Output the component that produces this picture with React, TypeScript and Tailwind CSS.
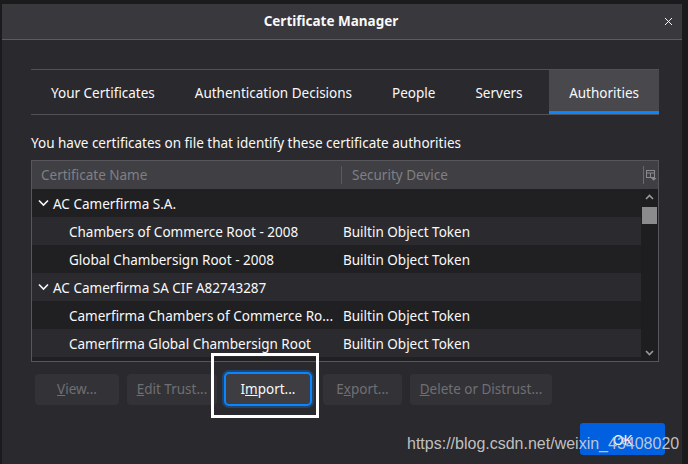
import { X } from "lucide-react";

const tabs = ["Your Certificates", "Authentication Decisions", "People", "Servers", "Authorities"];

type Row = { name: string; device?: string; group?: boolean };

const rows: Row[] = [
  { name: "AC Camerfirma S.A.", group: true },
  { name: "Chambers of Commerce Root - 2008", device: "Builtin Object Token" },
  { name: "Global Chambersign Root - 2008", device: "Builtin Object Token" },
  { name: "AC Camerfirma SA CIF A82743287", group: true },
  { name: "Camerfirma Chambers of Commerce Ro...", device: "Builtin Object Token" },
  { name: "Camerfirma Global Chambersign Root", device: "Builtin Object Token" },
  { name: "", device: "" },
];

const Chevron = () => (
  <svg width="11" height="8" viewBox="0 0 11 8" className="mr-[4px] mb-[2px]">
    <path d="M1 1.5 L5.5 6 L10 1.5" stroke="#f9f9fa" strokeWidth="1.6" fill="none" />
  </svg>
);

const App: React.FC = () => {
  return (
    <div
      className="relative w-[688px] h-[464px] overflow-hidden bg-[#1b1b1e] pt-[4px] pl-[2px] text-[#f9f9fa]"
      style={{ fontFamily: '"Noto Sans", "Open Sans", sans-serif' }}
    >
      <div className="w-[680px] h-[460px] bg-[#2a2a2e] flex flex-col">
        {/* Title bar */}
        <div className="relative h-[36px] bg-[#38383d] border-b border-[#5b5b60] flex items-center justify-center pr-[22px] shrink-0">
          <span className="text-[13.5px] font-bold">Certificate Manager</span>
          <X size={13} strokeWidth={1.8} className="absolute right-[7px] top-[11px] text-[#f9f9fa]" />
        </div>

        <div className="pl-[29px] pr-[23px] pt-[29px] flex flex-col">
          {/* Tabs */}
          <div className="flex h-[46px] border-y border-[#515156]">
            {tabs.map((t) => {
              const active = t === "Authorities";
              return (
                <div
                  key={t}
                  className={
                    active
                      ? "relative px-[20px] pt-[3px] bg-[#48484d] flex items-center text-[13.5px] ml-auto"
                      : "px-[20px] pt-[3px] flex items-center text-[13.5px]"
                  }
                >
                  {t}
                  {active && <div className="absolute left-0 right-0 bottom-0 h-[3px] bg-[#0a84ff]" />}
                </div>
              );
            })}
          </div>

          <div className="mt-[17px] pt-[1px] text-[13.5px] leading-[20px]">
            You have certificates on file that identify these certificate authorities
          </div>

          {/* Tree list */}
          <div className="mt-[7px] h-[202px] border border-[#56565b] flex flex-col overflow-hidden">
            <div className="h-[28px] bg-[#3f3f44] flex items-center text-[13.5px] text-[#808085] shrink-0">
              <div className="w-[310px] pl-[9px] border-r border-[#5a5a5f] h-[18px] leading-[18px]">Certificate Name</div>
              <div className="flex-1 pl-[10px] leading-[18px]">Security Device</div>
              <div className="w-[15px] h-[18px] border-l border-[#6a6a6f] flex items-center justify-end pr-[1px]">
                <svg width="11" height="11" viewBox="0 0 11 11">
                  <rect x="0.5" y="0.5" width="8" height="7" stroke="#8a8a8f" fill="none" />
                  <line x1="0.5" y1="3" x2="8.5" y2="3" stroke="#8a8a8f" />
                  <line x1="4.5" y1="3" x2="4.5" y2="7.5" stroke="#8a8a8f" />
                  <path d="M5 8 L10.5 8 L7.75 10.8 Z" fill="#8a8a8f" />
                </svg>
              </div>
            </div>
            <div className="flex flex-1 overflow-hidden">
              <div className="flex-1 flex flex-col">
                {rows.map((r, i) => (
                  <div
                    key={i}
                    className={`h-[28px] shrink-0 pt-[2px] flex items-center text-[13.5px] ${i % 2 === 0 ? "bg-[#202023]" : "bg-[#2b2b2f]"}`}
                  >
                    {r.group ? (
                      <div className="pl-[6px] flex items-center">
                        <Chevron />
                        {r.name}
                      </div>
                    ) : (
                      <>
                        <div className="w-[310px] pl-[37px] whitespace-nowrap">{r.name}</div>
                        <div className="pl-[1px]">{r.device}</div>
                      </>
                    )}
                  </div>
                ))}
              </div>
              {/* Scrollbar */}
              <div className="w-[17px] bg-[#1e1e21] flex flex-col items-center">
                <svg width="9" height="6" viewBox="0 0 9 6" className="mt-[5px]">
                  <path d="M1 5 L4.5 1.5 L8 5" stroke="#9a9a9e" strokeWidth="1.6" fill="none" />
                </svg>
                <div className="mt-[7px] w-[15px] h-[17px] bg-[#8b8b8e]" />
                <div className="flex-1" />
                <svg width="9" height="6" viewBox="0 0 9 6" className="mb-[5px]">
                  <path d="M1 1 L4.5 4.5 L8 1" stroke="#9a9a9e" strokeWidth="1.6" fill="none" />
                </svg>
              </div>
            </div>
          </div>

          {/* Buttons */}
          <div className="mt-[10px] pl-[4px] flex items-center text-[13.5px]">
            <div className="w-[84px] h-[31px] rounded-[4px] bg-[#333337] text-[#6f6f74] flex items-center justify-center">
              <span><u>V</u>iew...</span>
            </div>
            <div className="ml-[8px] w-[90px] h-[31px] rounded-[4px] bg-[#333337] text-[#6f6f74] flex items-center justify-center">
              <span><u>E</u>dit Trust...</span>
            </div>
            <div className="ml-[7px] w-[88px] h-[34px] rounded-[5px] border-2 border-[#0a84ff] bg-[#3d3d42] text-[#f9f9fa] flex items-center justify-center shadow-[0_0_0_2px_rgba(10,132,255,0.3)]">
              <span>I<u>m</u>port...</span>
            </div>
            <div className="ml-[11px] w-[79px] h-[31px] rounded-[4px] bg-[#333337] text-[#6f6f74] flex items-center justify-center">
              <span>E<u>x</u>port...</span>
            </div>
            <div className="ml-[8px] w-[142px] h-[31px] rounded-[4px] bg-[#333337] text-[#6f6f74] flex items-center justify-center">
              <span><u>D</u>elete or Distrust...</span>
            </div>
          </div>

          {/* OK */}
          <div className="mt-[17px] flex justify-end">
            <div className="mr-[-6px] w-[85px] h-[32px] rounded-[3px] bg-[#0060df] text-[14px] flex items-center justify-center">
              OK
            </div>
          </div>
        </div>
      </div>

      {/* Annotation box */}
      <div className="absolute left-[211px] top-[353px] w-[108px] h-[65px] border-[3px] border-white" />

      {/* Watermark */}
      <div
        className="absolute left-[407px] top-[432px] text-[16px] text-[#d4d4d4]/90 whitespace-nowrap"
        style={{ fontFamily: '"Liberation Sans", Arial, sans-serif' }}
      >
        https://blog.csdn.net/weixin_43408020
      </div>
    </div>
  );
};

export default App;
